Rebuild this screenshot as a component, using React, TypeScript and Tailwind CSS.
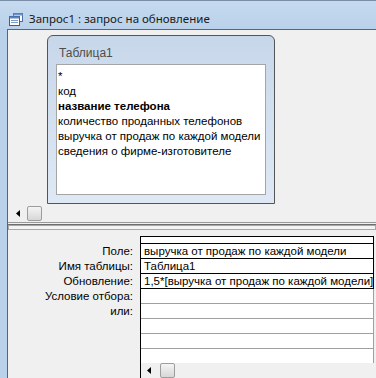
import React from 'react';

const font = { fontFamily: '"Liberation Sans", "Noto Sans", sans-serif' };

const fields = [
  { text: '*', bold: false },
  { text: 'код', bold: false },
  { text: 'название телефона', bold: true },
  { text: 'количество проданных телефонов', bold: false },
  { text: 'выручка от продаж по каждой модели', bold: false },
  { text: 'сведения о фирме-изготовителе', bold: false },
];

const labels = ['Поле:', 'Имя таблицы:', 'Обновление:', 'Условие отбора:', 'или:'];

const cells = [
  'выручка от продаж по каждой модели',
  'Таблица1',
  '1,5*[выручка от продаж по каждой модели]',
  '',
  '',
  '',
  '',
];

function QueryIcon() {
  return (
    <svg width="14" height="13" viewBox="0 0 14 13">
      <rect x="4.5" y="0.5" width="9" height="8" fill="#fff" stroke="#4a6fa5" />
      <rect x="4.5" y="0.5" width="9" height="2" fill="#6d93c8" />
      <rect x="0.5" y="3.5" width="10" height="9" fill="#fff" stroke="#3d5f94" />
      <rect x="0.5" y="3.5" width="10" height="2" fill="#5b84c0" />
      <line x1="2" y1="7.5" x2="9" y2="7.5" stroke="#7d9cc8" />
      <line x1="2" y1="9.5" x2="9" y2="9.5" stroke="#7d9cc8" />
    </svg>
  );
}

function ScrollLeft() {
  return (
    <svg width="4" height="7" viewBox="0 0 4 7">
      <path d="M4 0 L0 3.5 L4 7 Z" fill="#000" />
    </svg>
  );
}

function Thumb() {
  return (
    <div className="w-[15px] h-[15px] rounded-[2px] border border-[#9d9d9d] bg-gradient-to-b from-[#f4f4f4] to-[#d7d7d7]" />
  );
}

export default function App() {
  return (
    <div className="w-[376px] h-[378px] overflow-hidden flex flex-col bg-[#b9d1ea] text-[11.5px] text-black" style={font}>
      {/* title bar */}
      <div className="h-[29px] flex items-center gap-[6px] pl-[9px] pt-[8px] bg-gradient-to-b from-[#c6daef] to-[#b9d1ea] border-t border-[#7b8ea7]">
        <QueryIcon />
        <span className="text-[11.5px] text-[#1a1a1a]" style={{ fontFamily: '"Noto Sans", "Liberation Sans", sans-serif' }}>
          Запрос1 : запрос на обновление
        </span>
      </div>

      <div className="flex-1 flex pl-[7px]">
        <div className="flex-1 flex flex-col bg-[#f0f0f0] border-l border-t border-[#646464]">
          {/* upper pane */}
          <div className="h-[175px] pl-[39px] pt-[5px]">
            <div className="w-[228px] h-[169px] rounded-t-[6px] border border-[#555] bg-gradient-to-b from-[#c7d7ea] to-[#dfe9f5] flex flex-col">
              <div className="h-[28px] pl-[11px] pt-[9px] leading-[16px] text-[12px] text-[#4d4d4d]">Таблица1</div>
              <div className="ml-[8px] w-[210px] h-[131px] bg-white border border-[#a5a5a5] pt-[4px] pl-[1px]">
                {fields.map((f) => (
                  <div key={f.text} className={`h-[15px] leading-[15px] whitespace-nowrap ${f.bold ? 'font-bold' : ''}`}>
                    {f.text}
                  </div>
                ))}
              </div>
            </div>
          </div>

          {/* upper scrollbar */}
          <div className="h-[16px] flex items-center pl-[8px] gap-[7px]">
            <ScrollLeft />
            <Thumb />
          </div>

          {/* splitter */}
          <div className="h-[10px] flex flex-col pt-[1px]">
            <div className="h-[1px] bg-[#9a9a9a]" />
            <div className="h-[1px] bg-[#f0f0f0]" />
            <div className="h-[1px] bg-[#6e6e6e]" />
            <div className="h-[5px] border border-[#a8a8a8] bg-[#f4f4f4]" />
          </div>

          {/* bottom pane */}
          <div className="flex-1 flex">
            <div className="w-[132px] pt-[13px]">
              {labels.map((l) => (
                <div key={l} className="h-[15px] leading-[15px] text-right pr-[7px] whitespace-nowrap">
                  {l}
                </div>
              ))}
            </div>
            <div className="w-[234px] pt-[5px] flex flex-col">
              <div className="flex-1 flex flex-col border-l border-black bg-white">
                <div className="h-[8px] border-t border-b border-r border-black" />
                {cells.map((c, i) => (
                  <div
                    key={i}
                    className={`h-[15px] leading-[14px] pl-[3px] whitespace-nowrap overflow-hidden border-b border-r ${i < 3 ? 'border-black' : 'border-[#a0a0a0]'}`}
                  >
                    {c}
                  </div>
                ))}
                <div className="flex-1 border-r border-[#a0a0a0]" />
                <div className="h-[15px] flex items-center pl-[6px] gap-[9px] bg-[#f0f0f0]">
                  <ScrollLeft />
                  <Thumb />
                </div>
              </div>
            </div>
          </div>
        </div>
      </div>
    </div>
  );
}
